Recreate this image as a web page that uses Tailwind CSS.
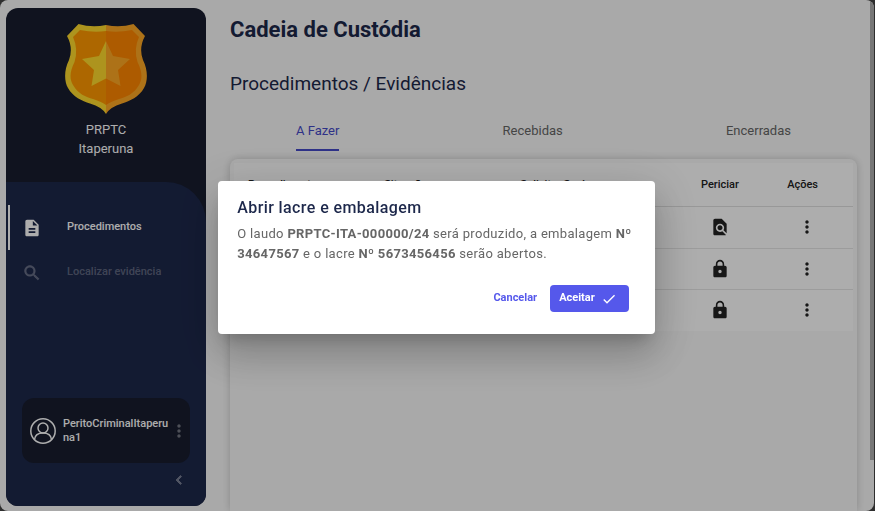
<!DOCTYPE html>
<html lang="pt-BR">
<head>
<meta charset="utf-8">
<meta name="viewport" content="width=device-width, initial-scale=1">
<title>Cadeia de Custódia</title>
<script src="https://cdn.jsdelivr.net/npm/@tailwindcss/browser@4"></script>
</head>
<body class="bg-[#444] font-[Roboto,sans-serif]">
<svg class="hidden" aria-hidden="true">
  <symbol id="dots" viewBox="0 0 24 24"><path d="M12 8c1.1 0 2-.9 2-2s-.9-2-2-2-2 .9-2 2 .9 2 2 2zm0 2c-1.100 0-2 .9-2 2s.9 2 2 2 2-.9 2-2-.9-2-2-2zm0 6c-1.100 0-2 .9-2 2s.9 2 2 2 2-.9 2-2-.9-2-2-2z"/></symbol>
  <symbol id="lock" viewBox="0 0 24 24"><path d="M18 8h-1V6c0-2.760-2.240-5-5-5S7 3.240 7 6v2H6c-1.100 0-2 .9-2 2v10c0 1.100.9 2 2 2h12c1.100 0 2-.9 2-2V10c0-1.100-.9-2-2-2zm-6 9c-1.100 0-2-.9-2-2s.9-2 2-2 2 .9 2 2-.9 2-2 2zm3.100-9H8.900V6c0-1.710 1.390-3.100 3.100-3.100s3.100 1.390 3.100 3.100v2z"/></symbol>
</svg>
<div class="h-screen pr-px">
  <div class="flex h-full overflow-hidden rounded-lg bg-[#fafafa]">
    <aside class="mt-2 mb-[5px] ml-1.5 flex w-[200px] shrink-0 flex-col overflow-hidden rounded-xl bg-[#181d2f] text-white">
      <header class="flex h-[174px] shrink-0 flex-col items-center pt-4 text-[13px] leading-[19px]">
        <svg class="mb-1.5 h-[90px] w-[82px]" viewBox="0 0 82 90" role="img" aria-label="Distintivo">
          <path fill="#ffda2d" d="M41 1Q27 4 13.500 0L2 12Q8.500 24 4 36C-1 46-1 57 3 64C8 73 17 77 25 79.500Q37 83 41 90Z"/>
          <path fill="#ffa924" d="M41 1Q55 4 68.500 0L80 12Q73.500 24 78 36C83 46 83 57 79 64C74 73 65 77 57 79.500Q45 83 41 90Z"/>
          <path fill="#ff9900" d="M41 7Q29 9 15 6L8 13Q13.500 25 9.500 38C4 49 5 56 8 61C13 70 21 73 28 75Q37 78 41 81Z"/>
          <path fill="#ff8600" d="M41 7Q53 9 67 6L74 13Q68.500 25 72.500 38C78 49 77 56 74 61C69 70 61 73 54 75Q45 78 41 81Z"/>
          <path fill="#ffda2d" d="M41 17L34 32L17 35L29 46L26.500 62L41 54.500Z"/>
          <path fill="#ffa924" d="M41 17L48 32L65 35L53 46L55.500 62L41 54.500Z"/>
        </svg>
        <p>PRPTC</p>
        <p>Itaperuna</p>
      </header>
      <div class="flex grow flex-col rounded-tr-[40px] bg-[#1d284b] pt-[23px]">
        <nav class="flex flex-col text-[11px] font-medium">
          <a href="#" class="ml-0.5 flex h-[45px] items-center border-l-2 border-white pl-3">
            <svg class="mr-[25px] size-5" viewBox="0 0 24 24" fill="currentColor"><path d="M14 2H6c-1.100 0-1.990.9-1.990 2L4 20c0 1.100.89 2 1.990 2H18c1.100 0 2-.9 2-2V8l-6-6zm2 16H8v-2h8v2zm0-4H8v-2h8v2zm-3-5V3.500L18.500 9H13z"/></svg>
            Procedimentos
          </a>
          <a href="#" class="ml-0.5 flex h-[45px] items-center border-l-2 border-transparent pl-3 text-white/30">
            <svg class="mr-[25px] size-5" viewBox="0 0 24 24" fill="currentColor" stroke="currentColor" stroke-width=".5"><path d="M15.500 14h-.79l-.28-.27C15.410 12.590 16 11.110 16 9.500 16 5.910 13.090 3 9.500 3S3 5.910 3 9.500 5.910 16 9.500 16c1.610 0 3.090-.59 4.230-1.570l.27.28v.79l5 4.990L20.490 19l-4.990-5zm-6 0C7.010 14 5 11.990 5 9.500S7.010 5 9.500 5 14 7.010 14 9.500 11.990 14 9.500 14z"/></svg>
            Localizar evidência
          </a>
        </nav>
        <div class="mx-4 mt-auto flex h-[65px] shrink-0 items-center rounded-xl bg-[#181d2f] pl-2">
          <svg class="mr-[7px] size-[26px] shrink-0" viewBox="0 0 26 26" fill="none" stroke="currentColor" stroke-width="1.500"><circle cx="13" cy="13" r="12.200"/><circle cx="13" cy="10" r="5"/><path d="M4.500 21.500C5 17 8.500 15 13 15S21 17 21.500 21.500"/></svg>
          <p class="w-[106px] text-[11px] leading-[14px] font-medium break-all">PeritoCriminalItaperuna1</p>
          <button type="button" aria-label="Opções do usuário" class="text-white/40"><svg class="size-5" fill="currentColor"><use href="#dots"/></svg></button>
        </div>
        <button type="button" aria-label="Recolher menu" class="mt-2 mr-[18px] mb-[17px] self-end text-white/40"><svg class="size-[18px]" viewBox="0 0 24 24" fill="currentColor" stroke="currentColor" stroke-width=".8"><path d="M15.410 7.410L14 6l-6 6 6 6 1.410-1.410L10.830 12z"/></svg></button>
      </div>
    </aside>
    <main class="flex min-w-0 grow flex-col pr-[13px] pl-6">
      <h1 class="mt-4 text-[22px] leading-7 font-bold text-[#1d284b]">Cadeia de Custódia</h1>
      <h2 class="mt-7 text-[19px] leading-6 text-[#1d284b]">Procedimentos / Evidências</h2>
      <nav class="mt-5 flex justify-between px-[66px] text-[13px] text-[#666]">
        <a href="#" class="border-b-2 border-[#4549c8] pt-[5px] pb-2 leading-5 text-[#4549c8]">A Fazer</a>
        <a href="#" class="pt-[5px] leading-5">Recebidas</a>
        <a href="#" class="pt-[5px] leading-5">Encerradas</a>
      </nav>
      <section class="mt-2 grow rounded-t-lg p-1 shadow-[0_0_8px_rgba(0,0,0,0.2)]">
        <table class="w-full table-fixed bg-white text-left text-[11px] text-[#222]">
          <colgroup><col class="w-[22%]"><col class="w-[22%]"><col class="w-[28%]"><col class="w-[13%]"><col class="w-[15%]"></colgroup>
          <thead>
            <tr class="h-[43px] border-b border-[#e0e0e0]"><th class="pt-0.5 pl-3.5 font-medium">Procedimento</th><th class="pt-0.5 pl-3.5 font-medium">Situação</th><th class="pt-0.5 pl-3.5 font-medium">Solicitar Senha</th><th class="pt-0.5 text-center font-medium">Periciar</th><th class="pt-0.5 pr-2 text-center font-medium">Ações</th></tr>
          </thead>
          <tbody>
            <tr class="h-[42px] border-b border-[#e6e6e6]"><td></td><td></td><td></td>
              <td class="text-center"><button type="button" aria-label="Periciar" class="align-middle"><svg class="size-5" viewBox="0 0 24 24" fill="currentColor"><path d="M20 19.590V8l-6-6H6c-1.100 0-1.990.9-1.990 2L4 20c0 1.100.89 2 1.990 2H18c.45 0 .85-.15 1.190-.4l-4.430-4.430c-.8.52-1.740.83-2.760.83-2.760 0-5-2.240-5-5s2.240-5 5-5 5 2.240 5 5c0 1.020-.31 1.960-.83 2.750L20 19.590zM9 13c0 1.660 1.340 3 3 3s3-1.340 3-3-1.340-3-3-3-3 1.340-3 3z"/></svg></button></td>
              <td class="text-center"><button type="button" aria-label="Ações" class="align-middle"><svg class="size-5" fill="currentColor"><use href="#dots"/></svg></button></td></tr>
            <tr class="h-[41px] border-b border-[#e6e6e6]"><td></td><td></td><td></td>
              <td class="text-center"><button type="button" aria-label="Bloqueado" class="align-middle"><svg class="size-5" fill="currentColor"><use href="#lock"/></svg></button></td>
              <td class="text-center"><button type="button" aria-label="Ações" class="align-middle"><svg class="size-5" fill="currentColor"><use href="#dots"/></svg></button></td></tr>
            <tr class="h-[42px]"><td></td><td></td><td></td>
              <td class="text-center"><button type="button" aria-label="Bloqueado" class="align-middle"><svg class="size-5" fill="currentColor"><use href="#lock"/></svg></button></td>
              <td class="text-center"><button type="button" aria-label="Ações" class="align-middle"><svg class="size-5" fill="currentColor"><use href="#dots"/></svg></button></td></tr>
          </tbody>
        </table>
      </section>
    </main>
    <div class="h-[90%] w-1 shrink-0 bg-[#b0b0b0]"></div>
  </div>
</div>
<div class="fixed inset-0 flex items-center justify-center bg-black/32 pr-0.5">
  <div role="dialog" aria-modal="true" aria-labelledby="dialog-title" class="mt-1 w-1/2 min-w-[280px] rounded bg-white px-[19px] pt-4 pb-[22px] shadow-[0_11px_15px_-7px_rgba(0,0,0,0.2),0_24px_38px_3px_rgba(0,0,0,0.14),0_9px_46px_8px_rgba(0,0,0,0.12)]">
    <h3 id="dialog-title" class="text-base leading-[22px] font-medium tracking-wide text-[#1d284b]">Abrir lacre e embalagem</h3>
    <p class="mt-[5px] text-[13px] leading-5 tracking-wide text-[#666]">O laudo <b>PRPTC-ITA-000000/24</b> será produzido, a embalagem <b>Nº 34647567</b> e o lacre <b>Nº 5673456456</b> serão abertos.</p>
    <div class="mt-[21px] flex justify-end pr-[7px] text-[11px] font-bold">
      <button type="button" class="px-[13px] text-[#5558eb]">Cancelar</button>
      <button type="button" class="flex h-[27px] items-center gap-1.5 rounded bg-[#5558eb] pr-3 pl-[9px] text-white">Aceitar <svg class="size-4" viewBox="0 0 24 24" fill="currentColor"><path d="M9 16.170L4.830 12l-1.420 1.410L9 19 21 7l-1.410-1.410z"/></svg></button>
    </div>
  </div>
</div>
</body>
</html>
